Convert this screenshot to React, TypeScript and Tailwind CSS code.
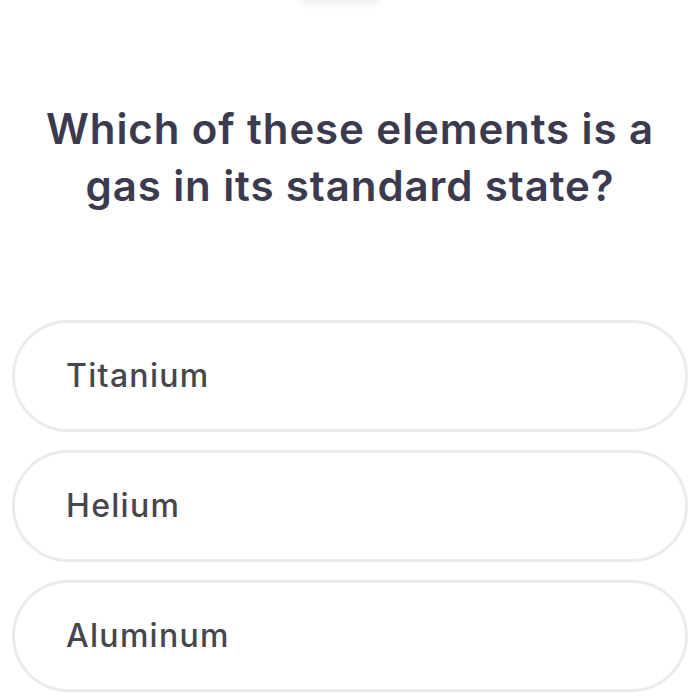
import React from "react";

const options = ["Titanium", "Helium", "Aluminum"];

export default function App() {
  return (
    <div
      className="w-[700px] h-[700px] bg-white overflow-hidden relative"
      style={{ fontFamily: "Inter, 'Noto Sans', sans-serif" }}
    >
      <div className="absolute left-[300px] -top-[8px] w-[80px] h-[12px] rounded-full bg-[#f0eff2] blur-[3px]" />
      <div className="pt-[100px] flex flex-col items-center">
        <h1 className="text-center text-[42px] leading-[57px] font-semibold text-[#3b3a4f] tracking-[0.9px]">
          Which of these elements is a
          <br />
          gas in its standard state?
        </h1>
      </div>
      <div className="mt-[106px] px-[12px] flex flex-col gap-[18px]">
        {options.map((o) => (
          <div
            key={o}
            className="h-[112px] rounded-full border-[3px] border-[#ebeaee] flex items-center pl-[51px]"
          >
            <span className="text-[32px] font-medium text-[#47464d] tracking-[1.3px]">{o}</span>
          </div>
        ))}
      </div>
    </div>
  );
}
